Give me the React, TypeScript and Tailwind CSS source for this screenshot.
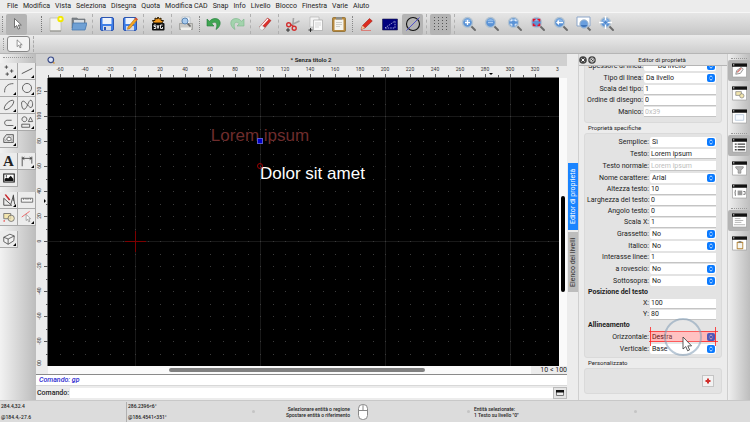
import clsx from "clsx"
import { useState } from "react"
import type { ReactNode } from "react"

const menus = [
  "File", "Modifica", "Vista", "Seleziona", "Disegna", "Quota", "Modifica CAD",
  "Snap", "Info", "Livello", "Blocco", "Finestra", "Varie", "Aiuto"
]

const Lens = ({ children }: { children?: ReactNode }) => (
  <>
    <path d="M10 10l4 4" stroke="#6b6b6b" strokeWidth="2" strokeLinecap="round" />
    <circle cx="6.5" cy="6.5" r="5" fill="#5b93d6" stroke="#b4c3d0" strokeWidth="1.4" />
    <path d="M3 5a4 4 0 0 1 7 0z" fill="#8bb7e8" />
    {children}
  </>
)

const Arrow = () => (
  <path d="M5.500 2.500v9l2.200-2 1.500 3.600 1.600-.7-1.500-3.400h3z" fill="#fff" stroke="#555" strokeWidth=".8" />
)

const icons: Record<string, ReactNode> = {
  arrow: <Arrow />,
  new: (
    <>
      <path d="M2 2h11v13H2z" fill="#f4f4f0" stroke="#b5b5ae" strokeWidth=".7" />
      <path d="M2 15h11" stroke="#8d8d88" />
      <circle cx="12.500" cy="3" r="3.200" fill="#f2e800" />
      <circle cx="12.500" cy="3" r="1.300" fill="#fffcc0" />
    </>
  ),
  open: (
    <>
      <path d="M1 4V2h5l1 1h7v9H1z" fill="#7f858c" stroke="#666b70" strokeWidth=".6" />
      <path d="M3 4h10v4H3z" fill="#d8dde2" />
      <path d="M2 7h14l-2 7H1z" fill="#6fa0d4" stroke="#4779b0" strokeWidth=".8" />
    </>
  ),
  save: (
    <>
      <rect x="1.500" y="1.500" width="13" height="13" rx="1.500" fill="#3f7fe8" stroke="#2c55b0" />
      <path d="M3.500 2h9v6h-9z" fill="#eef3fb" />
      <path d="M4 10h8v4.500H4z" fill="#d7dce6" />
      <path d="M5 11h2v3H5z" fill="#2c55b0" />
    </>
  ),
  saveAs: (
    <>
      <rect x="1.500" y="1.500" width="13" height="13" rx="1.500" fill="#3f7fe8" stroke="#2c55b0" />
      <path d="M3.500 2h9v6h-9z" fill="#eef3fb" />
      <path d="M4 10h8v4.500H4z" fill="#d7dce6" />
      <path d="M6 11l7.500-9 2 1.500-7.500 9-2.500.8z" fill="#f5a623" stroke="#a86a10" strokeWidth=".6" />
      <path d="M12.700 3l1-1.400 2 1.500-1.100 1.400z" fill="#d84a3a" />
    </>
  ),
  svg: (
    <>
      <path d="M4 7L2.500 4.500 5 4.500V2l2.200 1L8 1l1.200 2L11 2v2.500h2.500L12 7z" fill="#f39a1e" stroke="#2a1a00" strokeWidth="1" />
      <rect x="2" y="7" width="12.500" height="7.500" rx="1" fill="#111" />
      <path d="M6 9H4v1.500h1.800V12.500H3.800M7 9l1 3.500L9 9M12.500 9h-2v3.500h2V11" stroke="#fff" strokeWidth=".9" fill="none" />
    </>
  ),
  preview: (
    <>
      <path d="M4 1h8v7H4z" fill="#f3f6fa" stroke="#aab2ba" strokeWidth=".6" />
      <path d="M1.500 7.500h13v6h-13z" fill="#c9c9c6" stroke="#94948f" strokeWidth=".7" />
      <path d="M3 11.500h10v2.500H3z" fill="#efefec" />
      <path d="M9.500 7.500l3 3" stroke="#666" strokeWidth="1.600" />
      <circle cx="7" cy="5" r="3" fill="#a9cbee" stroke="#5d87b4" />
    </>
  ),
  undo: (
    <path d="M1 3v7h7L5.800 7.800C9 4.500 12.500 7 10 13.500 16 10 15.500 2.500 9 2.500 6.500 2.500 4.800 3.800 3.500 5.300z" fill="#3fa552" stroke="#1f7a35" strokeWidth=".6" />
  ),
  redo: (
    <path d="M15 3v7H8l2.200-2.200C7 4.500 3.500 7 6 13.500 0 10 .5 2.500 7 2.500c2.500 0 4.200 1.300 5.500 2.800z" fill="#a3d3ad" stroke="#79b588" strokeWidth=".6" />
  ),
  eraser: (
    <>
      <path d="M2.500 11L10.500 2l3.500 2.500-8 9.500z" fill="#d9302c" stroke="#9c1a18" strokeWidth=".5" />
      <path d="M4 10.500L11 3" stroke="#fff" strokeWidth="1.200" />
      <path d="M2.500 11l1.800-2 3.600 2.800L6 14c-1.500.6-4-1-3.500-3z" fill="#f2f2f2" stroke="#aaa" strokeWidth=".5" />
    </>
  ),
  cut: (
    <>
      <path d="M8.500 2l-.8 8M14.500 5L6 9" stroke="#a5a5a5" strokeWidth="1.600" />
      <circle cx="3.700" cy="8.700" r="2" fill="none" stroke="#d32f2f" strokeWidth="1.400" />
      <circle cx="9.200" cy="12.300" r="2" fill="none" stroke="#d32f2f" strokeWidth="1.400" />
      <path d="M5.500 8.500l3 2" stroke="#d32f2f" strokeWidth="1.400" />
      <path d="M3 12v4M1 14h4" stroke="#222" strokeWidth=".9" />
    </>
  ),
  copy: (
    <>
      <path d="M2 1h9v10H2z" fill="#f4f4f4" stroke="#b4b4b4" strokeWidth=".7" />
      <path d="M5.500 4h9v10.500h-9z" fill="#fafafa" stroke="#a8a8a8" strokeWidth=".7" />
      <path d="M7 7h6M7 9h6M7 11h4" stroke="#c4c4c4" strokeWidth=".7" />
      <path d="M2.500 12v4M.5 14h4" stroke="#222" strokeWidth=".9" />
    </>
  ),
  paste: (
    <>
      <rect x="1.500" y="1.500" width="13" height="14" rx="1" fill="#b98a3e" stroke="#84611f" strokeWidth=".7" />
      <path d="M3.500 3.500h9v10.500h-9z" fill="#f5f5f0" />
      <path d="M5 1h6v2.500H5z" fill="#8d8f8c" />
      <path d="M5 6.500h6M5 8.500h6M5 10.500h4" stroke="#c2c2bd" strokeWidth=".8" />
    </>
  ),
  pen: (
    <>
      <path d="M3.500 9.500L10.500 2.500l2.800 2.500L6 12l-4 1.500z" fill="#dc2a1e" stroke="#8e1810" strokeWidth=".5" />
      <path d="M3.500 9.500L6 12l-4 1.500z" fill="#edc79a" />
      <path d="M2 14.500h10" stroke="#e34b41" strokeWidth=".6" />
    </>
  ),
  blueprint: (
    <>
      <path d="M.5 3h15v11H.5z" fill="#00007e" stroke="#20204a" strokeWidth=".6" />
      <path d="M3 12L13 5v7z" stroke="#c6cbe8" strokeWidth=".8" strokeDasharray="1.500 1" fill="none" />
    </>
  ),
  circleLine: (
    <>
      <circle cx="8" cy="8" r="6.500" fill="none" stroke="#111" strokeWidth="1.100" />
      <path d="M1.500 14.500l13-13" stroke="#3a3ad0" strokeWidth=".8" />
    </>
  ),
  grid: (
    <path d="M1.500 1v14M5.500 1v14M9.500 1v14M13.500 1v14" stroke="#555" strokeWidth="1" strokeDasharray="1 2" />
  ),
  zoomIn: <Lens><path d="M4 6.500h5M6.500 4v5" stroke="#fff" strokeWidth="1.300" /></Lens>,
  zoomOut: <Lens><path d="M4 6.500h5" stroke="#a9c9ef" strokeWidth="1.300" /></Lens>,
  zoomAuto: <Lens><path d="M4 5.500V4h1.500M7.500 4H9v1.500M9 7.500V9H7.500M5.500 9H4V7.500" stroke="#fff" fill="none" /></Lens>,
  zoomSelection: (
    <Lens><path d="M3.500 5.500v-2h2M7.500 3.500h2v2M9.500 7.500v2h-2M5.500 9.500h-2v-2" stroke="#e1132b" strokeWidth="1.700" fill="none" /></Lens>
  ),
  zoomPrevious: <Lens><path d="M3 6.500l3-2.500v1.700h4v1.600H6V9z" fill="#fff" /></Lens>,
  zoomWindow: (
    <>
      <path d="M1 1h13v9H1z" fill="#fff" stroke="#8ba5c9" />
      <path d="M11.500 11.500l3 3" stroke="#6b6b6b" strokeWidth="2" />
      <circle cx="8" cy="8" r="4.200" fill="#6a9fde" stroke="#a9bccd" />
      <path d="M4.500 9h7a4 4 0 0 1-7 0z" fill="#3f74b8" />
    </>
  ),
  pan: (
    <Lens>
      <path d="M6.500 0v13M0 6.500h13" stroke="#fff" strokeWidth="1.400" />
      <path d="M6.500 4.500v4M4.500 6.500h4" stroke="#4d86cc" strokeWidth="1.400" />
    </Lens>
  ),
  point: <path d="M5 1.500v4M3 3.500h4M11 6v4M9 8h4M6 9.500v4M4 11.500h4" stroke="#333" strokeWidth=".9" />,
  line: <path d="M2 11L14 5" stroke="#444" />,
  arc: <path d="M3 13C2.500 7 6.500 2.800 13 3" stroke="#555" fill="none" />,
  circle: <circle cx="8" cy="8" r="5.200" stroke="#555" fill="none" />,
  ellipse: <ellipse cx="8" cy="8" rx="7" ry="3" transform="rotate(-45 8 8)" stroke="#555" fill="none" />,
  spline: <path d="M2.500 4c3-2.500 6 6 10 7 3-1 2-8 0-8.500-3-.5-4 10-8 10.500-2.500-.5-3.500-8-2-9z" stroke="#555" fill="none" />,
  polyline: <path d="M11 6H6c-4 0-4 6 0 6h7" stroke="#555" fill="none" />,
  shapes: <path d="M5 2a2.800 2.800 0 1 0 .1 0zM12 2.500L9.500 7.500h5zM2 10.500h9v3.500H2z" stroke="#444" strokeWidth=".9" fill="none" />,
  hatch: (
    <>
      <path d="M2 12V7l3-4h8v9z" fill="#e4e4e4" stroke="#444" strokeWidth=".9" />
      <path d="M3 11l6-7M6 12l6-8M10 12l3-4M3 8l2 3M7 4l5 7" stroke="#888" strokeWidth=".5" />
      <ellipse cx="8" cy="8" rx="2.500" ry="2" fill="#fff" stroke="#444" strokeWidth=".8" />
    </>
  ),
  dimension: <path d="M2.500 3v11M13.500 3v8M3 5h10M5 3.500L3 5l2 1.500M11 3.500L13 5l-2 1.500" stroke="#333" strokeWidth=".9" fill="none" />,
  image: (
    <>
      <path d="M2 3.500h12v9H2z" fill="#fff" stroke="#111" strokeWidth="1.200" />
      <path d="M3 11.500V9l2-1.500 2 1 3-3 3 3.500v2.500z" fill="#111" />
      <circle cx="5" cy="5.700" r=".8" fill="#111" />
    </>
  ),
  modify: (
    <>
      <path d="M2 6v8h9z" fill="none" stroke="#444" />
      <path d="M3 2l1.500-.5 5 6-1.500 1z" fill="#c8262b" />
      <path d="M13 2v7M13 3l-3 10M13 3l1.500 10" stroke="#444" fill="none" />
    </>
  ),
  ruler: (
    <>
      <path d="M1.500 6h13v4.500h-13z" fill="#f5f5f5" stroke="#555" strokeWidth=".9" />
      <path d="M4 6v2M6 6v1.500M8 6v2M10 6v1.500M12 6v2" stroke="#555" strokeWidth=".7" />
    </>
  ),
  block: (
    <>
      <path d="M2 4h8v6H2z" fill="#f3e6ae" stroke="#666" strokeWidth=".9" />
      <circle cx="10.500" cy="9.500" r="3.600" fill="#f3e6ae" fillOpacity=".7" stroke="#666" strokeWidth=".9" />
      <circle cx="2.500" cy="12.500" r="1" fill="#e66" />
    </>
  ),
  select: (
    <>
      <path d="M2 8L11 1.500" stroke="#ee5a5a" />
      <path d="M7 5v7l1.800-1.500 1.200 3 1.300-.5-1.200-3H12z" fill="#fff" stroke="#777" strokeWidth=".7" />
    </>
  ),
  box3d: <path d="M2 6l7-3.500 5 2L13.500 10 7 14l-5-3zM2 6l5 2 7-3.500M7 8v6" stroke="#444" strokeWidth=".9" fill="#f2f2f2" />,
  propEditor: (
    <>
      <path d="M4 12l1-4 5-3.500 2 2L9 11z" fill="#f4f4f4" stroke="#777" strokeWidth=".8" />
      <path d="M5.500 10L10 5.500" stroke="#d8726a" strokeWidth="1.400" />
    </>
  ),
  blockList: (
    <>
      <path d="M4 6h6v4H4z" fill="#f3e6ae" stroke="#777" strokeWidth=".7" />
      <circle cx="10.500" cy="10.500" r="2.300" fill="#f3e6ae" stroke="#777" strokeWidth=".7" />
    </>
  ),
  viewList: <path d="M3.500 6h9v6h-9z" fill="#f7faff" stroke="#b9c8dc" strokeWidth=".9" />,
  listing: <path d="M3 6.500h2M3 9.500h2M3 12.500h2M6 6.500h8M6 9.500h8M6 12.500h8" stroke="#444" strokeWidth="1.500" />,
  filter: <path d="M4 6h8v1.500L9.500 9.500V13h-3V9.500L4 7.500z" fill="#b5b5b5" stroke="#777" strokeWidth=".6" />,
  library: (
    <>
      <path d="M4 6.500C3 6.500 4 9 3 9.500c1 .5 0 3 1 3" stroke="#333" strokeWidth=".8" fill="none" />
      <path d="M6 7h5v5H6z" fill="#999" />
      <path d="M12 8h2v3h-2" stroke="#555" strokeWidth=".8" fill="none" />
    </>
  ),
  history: <path d="M3 6h6M3 8h9M3 10h7M2 12.500h12" stroke="#aaa" strokeWidth=".9" />,
  clipboard: (
    <>
      <rect x="5" y="6" width="7" height="8" rx=".8" fill="#b98a3e" />
      <path d="M6 7.500h5V13H6z" fill="#f5f5f0" />
      <path d="M7 5.500h3v1.500H7z" fill="#777" />
    </>
  )
}

const Icon = ({ name, className = "size-4" }: { name: string; className?: string }) => (
  <svg viewBox="0 0 16 16" fill="none" aria-hidden="true" className={className}>
    {icons[name]}
  </svg>
)

// "|" is a separator, ":" is a drag handle
const toolbar = [
  ":", "arrow", "gap", "new", "open", "|", "save", "saveAs", "|", "svg", "|", "preview", ":", "undo", "redo",
  "|", "eraser", "|", "cut", "copy", "paste", ":", "pen", "blueprint", "circleLine", "|", "grid", "|",
  "zoomIn", "zoomOut", "zoomAuto", "zoomSelection", "zoomPrevious", "zoomWindow", "pan"
]
const pressedTools = ["arrow", "circleLine", "grid"]

const toolGroups = [
  ["point", "line", "arc", "circle", "ellipse", "spline", "polyline", "shapes", "hatch"],
  ["text", "dimension", "image"],
  ["modify", "ruler", "block", "select"],
  ["box3d"]
]
const flatTools = ["text", "image", "ruler", "block"]

const dockGroups = [
  ["propEditor", "blockList", "viewList"],
  ["listing", "filter", "library"],
  ["history", "clipboard"]
]
const openDocks = ["propEditor", "listing", "history"]

// Drawing units to canvas pixels: 10 units are 12.5 px, the origin sits at (87, 163)
const toX = (u: number) => Math.round(87 + u * 1.25)
const toY = (u: number) => Math.round(163 - u * 1.25)
const range = (from: number, to: number, step: number) =>
  Array.from({ length: Math.floor((to - from) / step) + 1 }, (_, i) => from + i * step)

const dots = range(-60, 1200, 10)
  .flatMap((x) => range(-600, 120, 10).map((y) => `M${toX(x)} ${toY(y)}h1v1h-1z`))
  .join("")

const Toolbar = () => (
  <div className="flex h-[23px] items-center gap-[2px] border-t border-[#f6f6f6] bg-linear-to-b from-[#e6e6e6] to-[#c6c6c6] pl-px">
    {toolbar.map((name, i) => {
      if (name === "gap") return <span key={i} className="ml-[11px] flex w-[3px] justify-center"><i className="h-4 border-l border-dotted border-[#777]" /></span>
      if (name === ":") return <span key={i} className="flex w-[3px] justify-center"><i className="h-4 border-l border-dotted border-[#888]" /></span>
      if (name === "|") return <span key={i} className="flex w-[3px] justify-center"><i className="h-5 border-l border-dashed border-[#b0b0b0]" /></span>
      return (
        <button
          key={i}
          type="button"
          aria-label={name}
          className={clsx(
            "flex size-[21px] shrink-0 items-center justify-center rounded-[2px]",
            pressedTools.includes(name) && "bg-[#b4b4b4]"
          )}
        >
          <Icon name={name} />
        </button>
      )
    })}
  </div>
)

const ToolPalette = () => (
  <aside className="flex w-9 shrink-0 flex-col gap-[5px] bg-linear-to-r from-[#f2f2f2] to-[#bcbcbc] pt-[3px]">
    <i className="mx-[3px] border-t border-dotted border-[#999]" />
    {toolGroups.map((group) => (
      <div key={group[0]} className="grid grid-cols-2">
        {group.map((name) => (
          <button
            key={name}
            type="button"
            aria-label={name}
            className="relative flex h-[17px] items-center justify-center border-r border-b border-[#a9a9a9] bg-[#ececec]"
          >
            {name === "text" ? (
              <span className="font-['Liberation_Serif',serif] text-[15px] leading-none font-bold text-[#222]">A</span>
            ) : (
              <Icon name={name} className="size-[14px]" />
            )}
            {!flatTools.includes(name) && (
              <svg viewBox="0 0 3 3" className="absolute right-px bottom-px size-[3px]"><path d="M3 0v3H0z" fill="#000" /></svg>
            )}
          </button>
        ))}
      </div>
    ))}
  </aside>
)

const TopRuler = () => (
  <svg className="block h-3 w-full bg-[#ececec]" fontFamily="Roboto, sans-serif" fontSize="5">
    <path d="M12 11.500h511" stroke="#777" />
    {range(-70, 320, 10).map((u) => (
      <path key={u} d={`M${toX(u) + 12.5} ${u % 20 ? 9 : 8}v4`} stroke="#555" />
    ))}
    {range(-60, 320, 20).map((u) => (
      <text key={u} x={toX(u) + 12} y="5" textAnchor="middle" fill="#333">{u}</text>
    ))}
    <text x="520" y="5" fill="#333">3</text>
    <path d="M453 7h4l-2 2z" fill="#000" />
  </svg>
)

const SideRuler = () => (
  <svg className="block w-3 shrink-0 bg-[#ececec]" fontFamily="Roboto, sans-serif" fontSize="5">
    <path d="M11.500 0v288" stroke="#777" />
    {range(-160, 120, 10).map((u) => (
      <path key={u} d={`M${u % 20 ? 10 : 8} ${toY(u) + 0.5}h4`} stroke="#555" />
    ))}
    {range(-80, 120, 20).map((u) => (
      <text key={u} transform={`translate(5 ${toY(u)}) rotate(-90)`} textAnchor="middle" fill="#333">{u}</text>
    ))}
    <text transform="translate(5 285) rotate(-90)" textAnchor="middle" fill="#333">00</text>
    <path d="M8 121v4l2-2z" fill="#000" />
  </svg>
)

const Canvas = () => (
  <svg className="block w-full min-w-0 flex-1 bg-black" fontFamily="'Liberation Sans', Arial, sans-serif" fontSize="17">
    {range(0, 1000, 100).map((u) => (
      <path key={u} d={`M${toX(u) + 0.5} 0v2000`} stroke="#191919" />
    ))}
    {range(-1000, 100, 100).map((u) => (
      <path key={u} d={`M0 ${toY(u) + 0.5}h3000`} stroke="#191919" />
    ))}
    <path d={dots} fill="#3c3c3c" />
    <path d="M77 163.500h21M87.500 153v21" stroke="#7d0000" />
    <text x="212" y="63" textAnchor="middle" fill="#6e2c2c">Lorem ipsum</text>
    <text x="212" y="101" fill="#fff">Dolor sit amet</text>
    <rect x="209.500" y="60.500" width="5" height="5" fill="#0000c8" stroke="#5a5ac8" />
    <circle cx="212" cy="88" r="2.500" fill="none" stroke="#a00000" />
  </svg>
)

const DrawingArea = () => (
  <main className="flex min-w-0 flex-1 flex-col bg-[#ececec]">
    <div className="flex h-3 items-center bg-[#d0d0d0] pl-[11px]">
      <svg viewBox="0 0 8 8" className="size-2">
        <path d="M5 5l2.500 2.500" stroke="#d99a3c" strokeWidth="1.500" />
        <circle cx="3.800" cy="3.800" r="2.800" fill="#dbe4f5" stroke="#3a4a86" strokeWidth="1.200" />
      </svg>
      <h1 className="flex-1 text-center text-[6px] leading-3 font-semibold text-[#222]">* Senza titolo 2</h1>
    </div>
    <div className="flex min-h-0 flex-1 flex-col">
      <TopRuler />
      <div className="flex min-h-0 flex-1">
        <SideRuler />
        <Canvas />
        <div className="flex w-2 shrink-0 flex-col items-center bg-[#fafafa]">
          <i className="mt-[118px] h-[96px] w-[4px] rounded-full bg-black" />
        </div>
      </div>
    </div>
    <div className="flex h-2 items-center pl-3">
      <div className="flex h-2 flex-1 items-center bg-[#fafafa]">
        <i className="ml-[25%] h-1 w-[53%] rounded-full bg-[#808080]" />
      </div>
      <span className="w-9 text-right text-[7px] leading-2 text-[#222]">10 &lt; 100</span>
    </div>
    <output className="block h-3 border-y border-t-[#8a8a8a] border-b-[#d8d8d8] bg-white pl-[3px] text-[7px] leading-[10px] font-medium text-[#2a1fd0] italic">
      Comando: gp
    </output>
    <div className="flex h-[14px] items-center">
      <label htmlFor="command" className="px-px text-[7px] font-medium">Comando:</label>
      <input id="command" className="h-[10px] min-w-0 flex-1 bg-white px-1 text-[7px] outline-none" />
      <button type="button" aria-label="Cronologia comandi" className="flex h-3 w-[14px] items-center justify-center border border-[#bbb] bg-[#e4e4e4]">
        <svg viewBox="0 0 8 6" className="h-[6px] w-2"><path d="M.5.5h7v5h-7z" fill="#eee" stroke="#777" /><path d="M0 0h8v2.500H0z" fill="#111" /></svg>
      </button>
    </div>
  </main>
)

type Field = { id: string; label: string; value: string; kind: "select" | "text" | "number"; disabled?: boolean }

const generalFields: Field[] = [
  { id: "lineweight", label: "Spessore di linea:", value: "── Da livello", kind: "select" },
  { id: "linetype", label: "Tipo di linea:", value: "Da livello", kind: "select" },
  { id: "linetype-scale", label: "Scala del tipo:", value: "1", kind: "number" },
  { id: "draw-order", label: "Ordine di disegno:", value: "0", kind: "number" },
  { id: "handle", label: "Manico:", value: "0x39", kind: "text", disabled: true }
]

const textFields: Field[] = [
  { id: "simple", label: "Semplice:", value: "Sì", kind: "select" },
  { id: "text", label: "Testo:", value: "Lorem ipsum", kind: "text" },
  { id: "plain-text", label: "Testo normale:", value: "Lorem ipsum", kind: "text", disabled: true },
  { id: "font", label: "Nome carattere:", value: "Arial", kind: "select" },
  { id: "height", label: "Altezza testo:", value: "10", kind: "number" },
  { id: "width", label: "Larghezza del testo:", value: "0", kind: "number" },
  { id: "angle", label: "Angolo testo:", value: "0", kind: "number" },
  { id: "scale-x", label: "Scala X:", value: "1", kind: "number" },
  { id: "bold", label: "Grassetto:", value: "No", kind: "select" },
  { id: "italic", label: "Italico:", value: "No", kind: "select" },
  { id: "spacing", label: "Interasse linee:", value: "1", kind: "number" },
  { id: "backward", label: "a rovescio:", value: "No", kind: "select" },
  { id: "upside-down", label: "Sottosopra:", value: "No", kind: "select" }
]

const positionFields: Field[] = [
  { id: "x", label: "X:", value: "100", kind: "number" },
  { id: "y", label: "Y:", value: "80", kind: "number" }
]

const alignFields: Field[] = [
  { id: "horizontal", label: "Orizzontale:", value: "Destra", kind: "select" },
  { id: "vertical", label: "Verticale:", value: "Base", kind: "select" }
]

const Spotlight = () => (
  <div className="pointer-events-none absolute inset-0 z-10">
    <svg className="absolute inset-0 size-full overflow-visible">
      <rect width="100%" height="10" fill="#ff0000" fillOpacity=".28" />
      <path d="M-1 -.5h69M-1 9.500h69M.5-5v19M65.500-5v19" stroke="#ff2020" strokeOpacity=".8" />
      <circle cx="33" cy="5" r="18" fill="#fff" fillOpacity=".15" stroke="#7f9ab5" strokeOpacity=".55" strokeWidth="2" />
      <path d="M33 5v12l2.800-2.400 1.800 4.200 2-.9-1.800-4h3.800z" fill="#fff" stroke="#333" strokeWidth=".8" />
    </svg>
  </div>
)

const FieldRow = ({ field, wide }: { field: Field; wide?: boolean }) => {
  const [value, setValue] = useState(field.value)
  return (
    <div
      className={clsx(
        "grid items-center gap-px",
        wide ? "grid-cols-[56px_minmax(0,1fr)]" : "grid-cols-[62px_minmax(0,1fr)]",
        field.kind === "number" ? "h-[11px]" : "h-3"
      )}
    >
      <label htmlFor={field.id} className="text-right whitespace-nowrap">{field.label}</label>
      {field.kind === "select" ? (
        <div className="relative">
          <select
            id={field.id}
            value={value}
            onChange={(e) => setValue(e.target.value)}
            className="block h-[10px] w-full appearance-none rounded-[2px] bg-white px-[2px] leading-[10px] outline-none"
          >
            <option>{field.value}</option>
          </select>
          <svg viewBox="0 0 8 8" className="pointer-events-none absolute top-px right-px size-2">
            <rect width="8" height="8" rx="2" fill="#0a7aff" />
            <path d="M2.500 3.200L4 1.800l1.500 1.400M2.500 4.800L4 6.200l1.500-1.400" stroke="#fff" strokeWidth=".8" fill="none" />
          </svg>
          {field.id === "horizontal" && <Spotlight />}
        </div>
      ) : (
        <input
          id={field.id}
          value={value}
          disabled={field.disabled}
          onChange={(e) => setValue(e.target.value)}
          className="block h-[10px] w-full border-b border-[#c4c4c4] bg-white px-px outline-none disabled:text-[#bdbdbd]"
        />
      )}
    </div>
  )
}

const boxStyle = "rounded-[3px] border border-[#dadada] bg-[#e3e3e3] pr-[5px] pl-[2px]"

const PropertyEditor = () => (
  <section className="flex w-[150px] shrink-0 flex-col border-x border-[#cfcfcf] bg-[#ececec]">
    <header className="flex h-3 items-center gap-px border-b border-[#b5b5b5] bg-[#e2e2e2]">
      {["Chiudi", "Sgancia"].map((name, i) => (
        <button key={name} type="button" aria-label={name} className="flex size-2 items-center justify-center">
          <svg viewBox="0 0 8 8" className="size-2">
            <circle cx="4" cy="4" r="3.800" fill="#444" />
            {i === 0 ? (
              <path d="M2.500 2.500l3 3m0-3l-3 3" stroke="#fff" />
            ) : (
              <path d="M4 2a2 2 0 1 0 .1 0zM3 5l2-2" stroke="#eee" strokeWidth=".9" fill="none" />
            )}
          </svg>
        </button>
      ))}
      <h2 className="flex-1 text-center text-[6px] leading-none">Editor di proprietà</h2>
    </header>
    <div className="flex-1 overflow-hidden px-[5px]">
      <div className={clsx(boxStyle, "-mt-[7px] pb-1")}>
        {generalFields.map((field) => <FieldRow key={field.id} field={field} wide />)}
      </div>
      <h3 className="pl-1 text-[6px] leading-[10px]">Proprietà specifiche</h3>
      <div className={clsx(boxStyle, "py-[2px]")}>
        {textFields.map((field) => <FieldRow key={field.id} field={field} />)}
        <h4 className="h-[11px] pl-px leading-[11px] font-bold">Posizione del testo</h4>
        {positionFields.map((field) => <FieldRow key={field.id} field={field} />)}
        <h4 className="h-[11px] pl-px leading-[11px] font-bold">Allineamento</h4>
        {alignFields.map((field) => <FieldRow key={field.id} field={field} />)}
      </div>
      <h3 className="pl-1 text-[6px] leading-[10px]">Personalizzato</h3>
      <div className={clsx(boxStyle, "flex justify-end py-[6px]")}>
        <button type="button" aria-label="Aggiungi" className="mr-[2px] flex size-3 items-center justify-center border border-[#c4c4c4] bg-[#f2f2f2]">
          <svg viewBox="0 0 6 6" className="size-[6px]"><path d="M3 .5v5M.5 3h5" stroke="#d0302c" strokeWidth="2" /></svg>
        </button>
      </div>
    </div>
  </section>
)

const DockStrip = () => (
  <aside className="flex w-[22px] shrink-0 flex-col bg-linear-to-r from-[#efefef] to-[#bdbdbd] pt-1">
    {dockGroups.map((group) => (
      <div key={group[0]} className="flex flex-col pb-[5px]">
        <i className="mx-[3px] border-t border-dotted border-[#999]" />
        {group.map((name) => (
          <button
            key={name}
            type="button"
            aria-label={name}
            className={clsx(
              "my-px flex h-[21px] items-center justify-center rounded-[2px]",
              openDocks.includes(name) && "bg-[#b4b4b4]"
            )}
          >
            <svg viewBox="0 0 16 16" fill="none" className="size-[15px]">
              <path d="M.5 1h15v14H.5z" fill="#fff" stroke="#999" strokeWidth=".7" />
              <path d="M0 .5h16V4H0z" fill="#111" />
              <path d="M1 2h1.500" stroke="#fff" />
              {icons[name]}
            </svg>
          </button>
        ))}
      </div>
    ))}
  </aside>
)

const App = () => (
  <div className="flex min-h-screen flex-col bg-[#ececec] font-['Roboto',sans-serif] text-[7px] leading-none text-[#1c1c1c]">
    <nav className="flex h-3 items-center gap-[5px] pl-[7px]">
      {menus.map((menu) => (
        <button key={menu} type="button" className="whitespace-nowrap">{menu}</button>
      ))}
    </nav>
    <Toolbar />
    <div className="flex h-[19px] items-center border-b border-[#b5b5b5] bg-linear-to-b from-[#ebebeb] to-[#cdcdcd] pl-[3px]">
      <i className="h-3 w-1 border-l border-dotted border-[#999]" />
      <button type="button" aria-label="Seleziona" className="flex h-4 w-[23px] items-center justify-center rounded-[3px] border border-[#888] bg-[#f3f3f3]">
        <Icon name="arrow" className="size-3" />
      </button>
      <i className="ml-[3px] h-4 border-l border-dashed border-[#aaa]" />
    </div>
    <div className="flex flex-1">
      <ToolPalette />
      <DrawingArea />
      <div role="tablist" className="flex w-[11px] shrink-0 flex-col items-end gap-[2px] pt-[109px] text-[7px]">
        <button type="button" role="tab" aria-selected="true" className="h-[67px] w-[10px] rotate-180 bg-[#1a84ff] text-center leading-[10px] text-white [writing-mode:vertical-rl]">
          Editor di proprietà
        </button>
        <button type="button" role="tab" aria-selected="false" className="h-[60px] w-[10px] rotate-180 bg-[#bdbdbd] text-center leading-[10px] text-[#333] [writing-mode:vertical-rl]">
          Elenco dei livelli
        </button>
      </div>
      <PropertyEditor />
      <DockStrip />
    </div>
    <footer className="grid h-[22px] grid-cols-[127fr_125fr_98fr_120fr_164fr_116fr] items-center border-t border-[#c8c8c8] bg-[#dcdcdc] text-[5px] font-medium">
      <div className="flex h-5 flex-col justify-between border-r border-[#b0b0b0] py-[2px] pl-px">
        <span>284.4,32.4</span>
        <span>@184.4,-27.6</span>
      </div>
      <div className="flex h-5 flex-col justify-between py-[2px] pl-px">
        <span>286.2396&lt;6°</span>
        <span>@186.4541&lt;351°</span>
      </div>
      <div className="flex items-center justify-between">
        <i className="size-[3px] rounded-full bg-[#c4c4c4]" />
        <p className="text-right leading-[6px]">Selezionare entità o regione<br />Spostare entità o riferimento</p>
      </div>
      <div className="flex items-center justify-between pl-2">
        <svg viewBox="0 0 10 16" className="h-4 w-[10px]">
          <rect x=".5" y=".5" width="9" height="15" rx="4" fill="#fff" stroke="#888" />
          <path d="M.5 6.500h9M5 .5v6" stroke="#888" />
        </svg>
        <i className="size-[3px] rounded-full bg-[#c4c4c4]" />
      </div>
      <p className="pl-1 leading-[6px]">Entità selezionate:<br />1 Testo su livello "0"</p>
      <i className="size-[3px] rounded-full bg-[#c4c4c4]" />
    </footer>
  </div>
)

export default App
